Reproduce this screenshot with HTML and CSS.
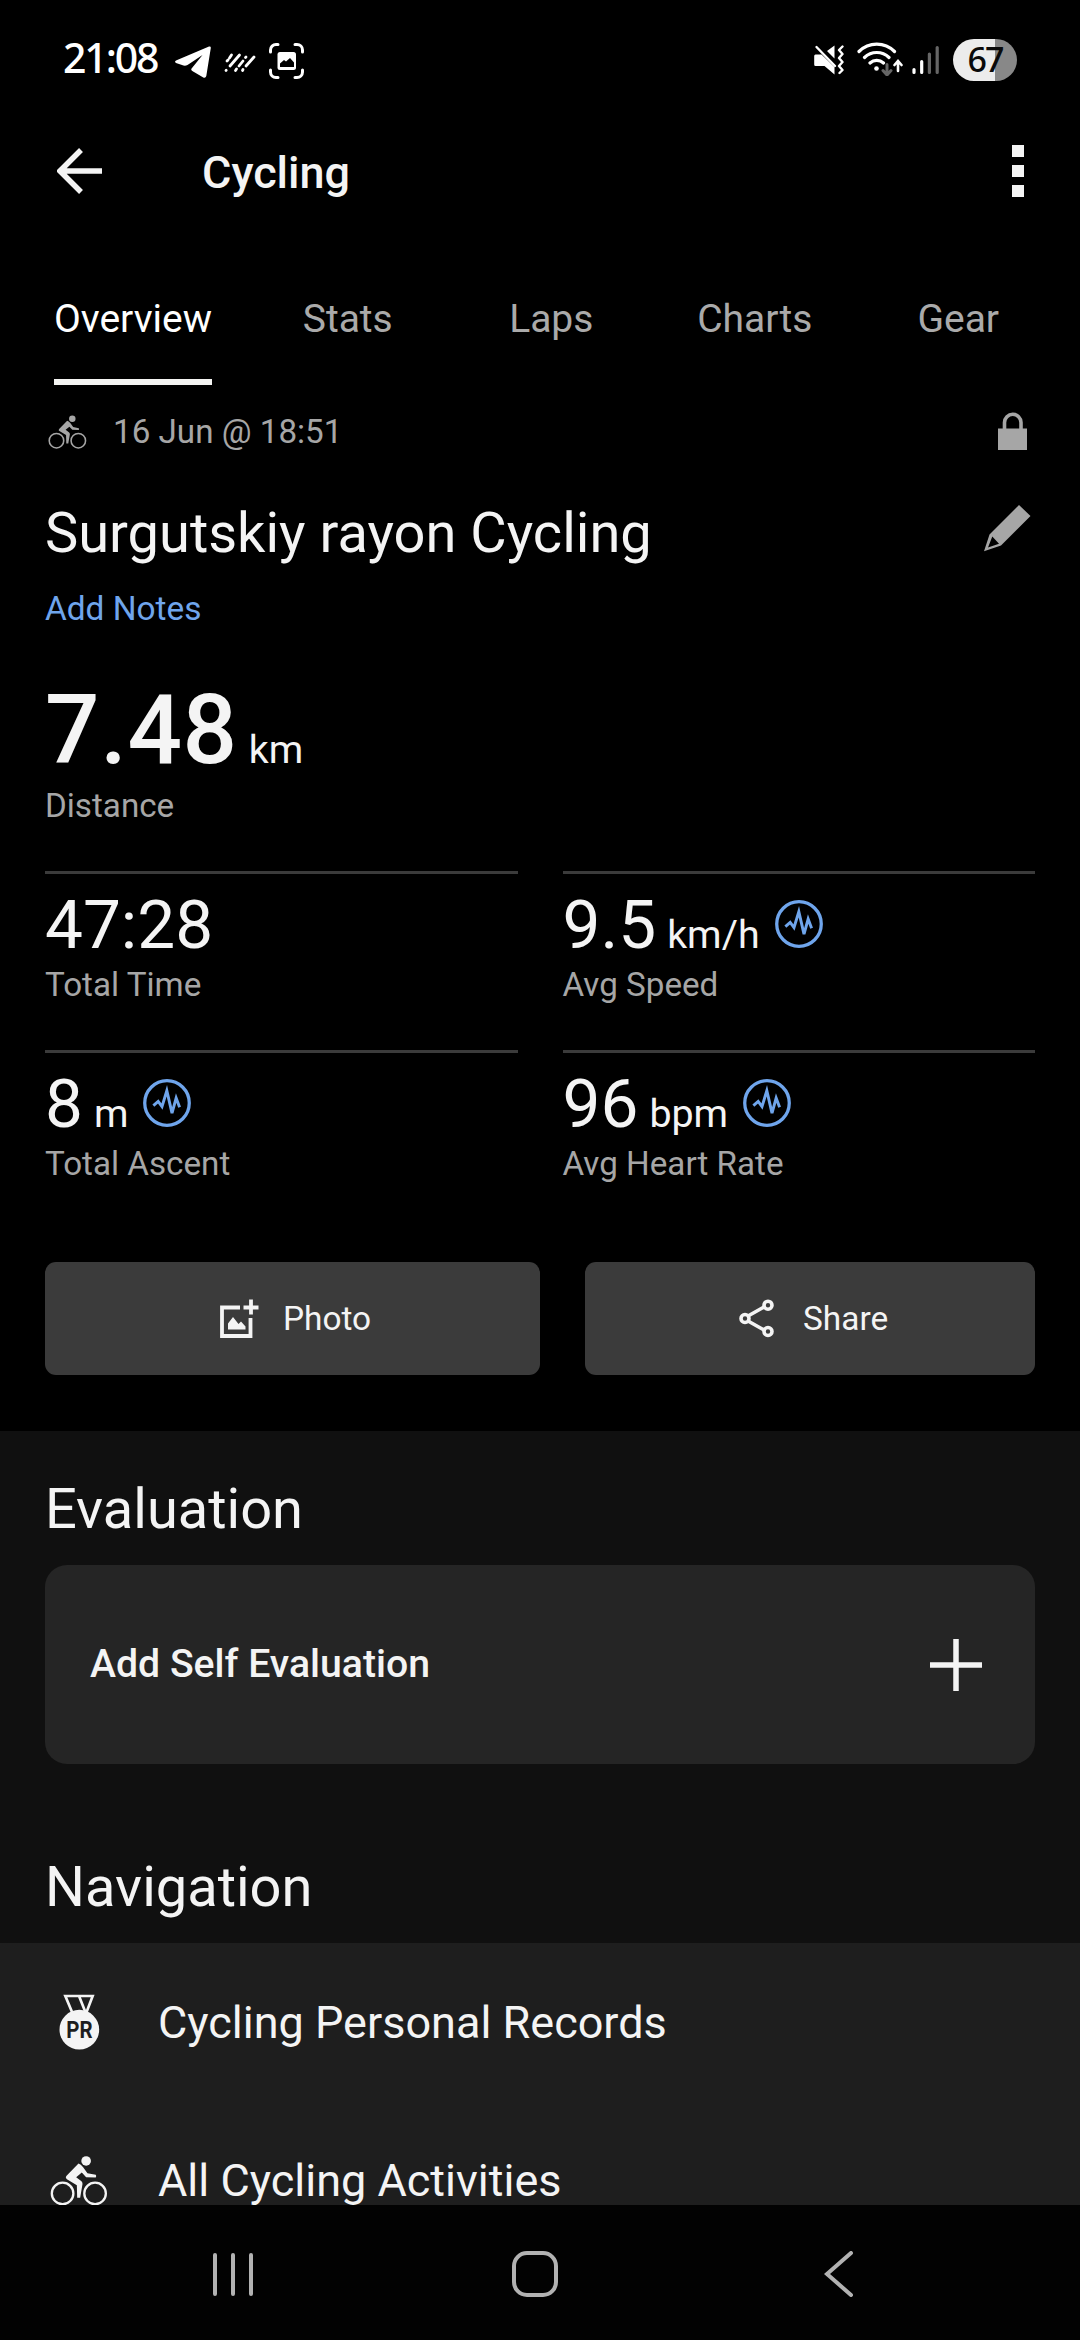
FILE: index.html
```html
<!DOCTYPE html>
<html lang="en">
<head>
<meta charset="utf-8">
<title>Cycling</title>
<link rel="stylesheet" href="styles.css">
</head>
<body>
<svg class="defs" aria-hidden="true">
  <symbol id="cyclist" viewBox="60 520 175 152">
    <circle cx="98" cy="635" r="32.500" fill="none" stroke="currentColor" stroke-width="7"/>
    <circle cx="196" cy="635" r="32.500" fill="none" stroke="currentColor" stroke-width="7"/>
    <circle cx="169" cy="537" r="14.500" fill="currentColor"/>
    <path fill="currentColor" d="M146 545q7 2 14 11l13 18 25 5q3 3 0 8l-29-1-13-14-17 14 16 12q4 4 3 9l-7 41h-9l-1-38-30-18q-6-4-1-10z"/>
  </symbol>
  <symbol id="wave" viewBox="0 0 139 139">
    <circle cx="69.500" cy="69.500" r="64.500" fill="none" stroke="currentColor" stroke-width="9.500"/>
    <path d="M30 77l14-12 11 15 14-46 15 65 12-44 10 27" fill="none" stroke="currentColor" stroke-width="8.500"/>
  </symbol>
</svg>
<div class="screen">
  <div class="status">
    <span class="clock">21:08</span>
    <svg class="telegram" width="36" height="32" viewBox="0 0 36 32"><path fill="#fff" d="M1 14.500 34 .500q2-.500 1.800 1.500l-4.500 28q-.700 2.500-3 1.500l-11-6.500q-2-1.500-.300-3l10.500-13-15 10q-2 1-4 .500L1 17q-2-1.200 0-2.500z"/></svg>
    <svg class="dashes" width="32" height="20" viewBox="0 0 32 20"><path fill="none" stroke="#fff" stroke-width="2.800" stroke-linecap="round" d="M3 8l1-1M5.500 5l2-3M2 17.500l.200-.200M6 13l9.500-11M11.500 17.500l1-1.500M15 13l4-5M21.500 4.500l.500-.500M18.500 17.500l.500-1M22 13l8-9"/></svg>
    <svg class="capture" width="36" height="36" viewBox="0 0 36 36"><path fill="none" stroke="#fff" stroke-width="3" stroke-linecap="round" d="M1.500 9V7a5.500 5.500 0 0 1 5.500-5.500h2M26 1.500h2A5.500 5.500 0 0 1 33.500 7v2M33.500 27v2a5.500 5.500 0 0 1-5.500 5.500h-2M9 34.500H7A5.500 5.500 0 0 1 1.500 29v-2"/><rect x="8.500" y="9" width="18.500" height="18" rx="2.500" fill="#fff"/><path d="M11 24v-3.500l4-3.500 2 1.500 4-3.500 4 4.500V24z" fill="#000"/></svg>
    <span class="grow"></span>
    <svg class="mute" width="30" height="30" viewBox="0 0 30 30"><path fill="#fff" d="M1.500 9.500h6L20.500 22v7.500l-10-8.500h-9Q.200 21 .200 19.500V11q0-1.500 1.300-1.500zM13 6l7.500-5.500v13z"/><path d="M2.500 2l18.500 19" fill="none" stroke="#fff" stroke-width="2.400" stroke-linecap="round"/><path d="M28.500 1.500l-3.500 3.500 3.500 4-3.500 4 3.500 4-3.500 4 3.500 4-3 3" fill="none" stroke="#fff" stroke-width="2.400" stroke-linecap="round" stroke-linejoin="round"/></svg>
    <svg class="wifi" width="46" height="34" viewBox="0 0 46 34"><g fill="none" stroke="#fff" stroke-width="3.200" stroke-linecap="round"><path d="M2 9.500a25 25 0 0 1 35.500 0M7.500 15.500a17.500 17.500 0 0 1 24.500 0M13 21a10 10 0 0 1 13.500 0"/><path d="M41 29V20M37.500 23l3.500-4 3.500 4" stroke-width="2.600"/></g><circle cx="19.500" cy="26.500" r="2.300" fill="#fff"/><path d="M30 22.500v10M26 28.500l4 4.500 4-4.500" fill="none" stroke="#666" stroke-width="3" stroke-linecap="round"/></svg>
    <svg class="signal" width="28" height="30" viewBox="0 0 28 30"><g stroke-width="3.200" stroke-linecap="round"><path d="M2 24.500v3M9.700 16.500v11" stroke="#fff"/><path d="M17.400 9v18.500M25.200 2.500v25" stroke="#666"/></g></svg>
    <span class="battery">67</span>
  </div>

  <header class="bar">
    <svg class="back" width="46" height="46" viewBox="0 0 46 46"><path d="M24 2 3 23l21 21M3 23h42" fill="none" stroke="#f4f4f4" stroke-width="5.500"/></svg>
    <h1 class="bar-title">Cycling</h1>
    <div class="more"><i></i><i></i><i></i></div>
  </header>

  <nav class="tabs">
    <a class="tab tab-first"><span class="tab-label active">Overview</span></a>
    <a class="tab"><span class="tab-label">Stats</span></a>
    <a class="tab"><span class="tab-label">Laps</span></a>
    <a class="tab"><span class="tab-label">Charts</span></a>
    <a class="tab"><span class="tab-label">Gear</span></a>
  </nav>

  <main class="content">
    <section class="summary">
      <div class="date-row">
        <svg class="sport" width="39" height="34"><use href="#cyclist"/></svg>
        <span class="date">16 Jun @ 18:51</span>
        <svg class="lock" width="30" height="39" viewBox="0 0 30 39"><path d="M6.500 18V10.500a8 8 0 0 1 16.500 0V18" fill="none" stroke="#a6a6a6" stroke-width="3.600"/><path d="M0 16.500h29V38H0z" fill="#a6a6a6"/></svg>
      </div>
      <div class="name-row">
        <h2 class="name">Surgutskiy rayon Cycling</h2>
        <svg class="pencil" width="47" height="47" viewBox="0 0 47 47"><path fill="#a6a6a6" fill-rule="evenodd" d="M35 0 46.500 11 17 40.500 0 46.200 5.500 29.500zM8.300 31.500 4 42.500l11-3.700z"/></svg>
      </div>
      <a class="notes">Add Notes</a>

      <div class="distance"><span class="big">7.48</span><span class="unit">km</span></div>
      <div class="label distance-label">Distance</div>

      <div class="grid">
        <div class="cell"><div class="value"><span>47:28</span></div><div class="label">Total Time</div></div>
        <div class="cell"><div class="value"><span>9.5<span class="unit">km/h</span></span><svg class="wave" width="48" height="48"><use href="#wave"/></svg></div><div class="label">Avg Speed</div></div>
        <div class="cell"><div class="value"><span>8<span class="unit">m</span></span><svg class="wave" width="48" height="48"><use href="#wave"/></svg></div><div class="label">Total Ascent</div></div>
        <div class="cell"><div class="value"><span>96<span class="unit">bpm</span></span><svg class="wave" width="48" height="48"><use href="#wave"/></svg></div><div class="label">Avg Heart Rate</div></div>
      </div>

      <div class="buttons">
        <button class="button photo"><svg width="39" height="40" viewBox="0 0 39 40"><path d="M20 8.500H2V37h28.500V19" fill="none" stroke="#f4f4f4" stroke-width="3.800"/><path d="M23.500 8.500H38.500M31 .500V15.500" stroke="#f4f4f4" stroke-width="3.800"/><path d="M8 30.500v-6l5-6.500 5.500 7 2.500-2.500 4.500 5v3z" fill="#f4f4f4"/></svg>Photo</button>
        <button class="button share"><svg width="36" height="39" viewBox="0 0 36 39"><g fill="none" stroke="#f4f4f4" stroke-width="3.600"><path d="M9 17 26 7.500M9 22l17 9.500"/><circle cx="6" cy="19.500" r="4"/><circle cx="29" cy="6.200" r="4"/><circle cx="29" cy="32.500" r="4"/></g></svg>Share</button>
      </div>
    </section>

    <section class="more-info">
      <h2 class="heading">Evaluation</h2>
      <div class="card"><span>Add Self Evaluation</span><svg width="52" height="52" viewBox="0 0 52 52"><path d="M26 0v52M0 26h52" stroke="#f4f4f4" stroke-width="5.500"/></svg></div>
      <h2 class="heading nav-heading">Navigation</h2>
      <div class="list">
        <div class="row"><span class="row-icon"><svg width="41" height="56" viewBox="88 40 123 168"><path fill="none" stroke="#f4f4f4" stroke-width="8" d="M107 46h82l-19 50h-42zM148 46l20 50"/><circle cx="149" cy="147" r="59.500" fill="#f4f4f4"/><text class="pr" x="110" y="172" textLength="79" lengthAdjust="spacingAndGlyphs">PR</text></svg></span><span class="row-text">Cycling Personal Records</span></div>
        <div class="row"><span class="row-icon"><svg width="58" height="51"><use href="#cyclist"/></svg></span><span class="row-text">All Cycling Activities</span></div>
      </div>
    </section>
  </main>

  <footer class="navbar">
    <svg width="42" height="46" viewBox="0 0 42 46"><path d="M3 4v39M21 4v39M39 4v39" stroke="#b2b2b2" stroke-width="4" stroke-linecap="round"/></svg>
    <svg class="home" width="46" height="46" viewBox="0 0 46 46"><rect x="2" y="2" width="42" height="42" rx="13" fill="none" stroke="#b2b2b2" stroke-width="4"/></svg>
    <svg width="30" height="46" viewBox="0 0 30 46"><path d="M27 2 3 23l24 21" fill="none" stroke="#b2b2b2" stroke-width="4" stroke-linecap="round"/></svg>
  </footer>
</div>
</body>
</html>
```
FILE: styles.css
```css
* { box-sizing: border-box; }
body { margin: 0; background: #000; font-family: Roboto, sans-serif; color: #f4f4f4; }
h1, h2 { margin: 0; font-weight: 400; }
svg { display: block; flex: none; }
.defs { display: none; }

.screen { display: flex; flex-direction: column; width: 1080px; height: 2340px; overflow: hidden; }

/* Status bar */
.status { flex: none; display: flex; align-items: flex-start; height: 96px; padding: 0 63px 0 63px; }
.clock { width: 112px; padding-top: 32px; font: 500 41px/50px "Noto Sans", sans-serif; letter-spacing: -2.1px; white-space: nowrap; color: #fff; }
.telegram { margin-top: 46px; }
.dashes { margin: 53px 0 0 13px; }
.capture { margin: 43px 0 0 13px; }
.grow { flex: 1; }
.mute { margin-top: 45px; }
.wifi { margin: 42px 0 0 13px; }
.signal { margin: 45px 0 0 9px; }
.battery { width: 64px; height: 42px; margin: 39px 0 0 13px; border-radius: 21px; background: linear-gradient(90deg, #ececec 66%, #888 66%); color: #0a0a0a; font: 500 34px/41px "Noto Sans", sans-serif; letter-spacing: -2px; text-align: center; }

/* App bar */
.bar { flex: none; display: flex; align-items: center; height: 150px; padding: 0 56px 0 57px; }
.bar-title { flex: 1; margin-left: 99px; padding-top: 3px; font-size: 45px; font-weight: 500; line-height: 54px; }
.more { display: flex; flex-direction: column; gap: 8px; }
.more i { width: 12px; height: 12px; background: #f4f4f4; }

/* Tabs */
.tabs { flex: none; display: flex; height: 139px; padding-left: 20px; }
.tab { display: flex; justify-content: center; width: 203.500px; color: #aaa; font-size: 39px; line-height: 47px; }
.tab-first { width: 226px; }
.tab-label { padding-top: 50px; }
.active { color: #fff; border-bottom: 6px solid #f4f4f2; }

.content { flex: 1; min-height: 0; overflow: hidden; }

/* Activity summary */
.summary { padding: 0 45px 56px; }
.date-row { display: flex; align-items: center; height: 93px; padding: 0 7px 0 3px; color: #a6a6a6; }
.date { flex: 1; margin-left: 26px; font-size: 33.200px; line-height: 40px; }
.name-row { display: flex; align-items: center; justify-content: space-between; height: 110px; padding-right: 4px; }
.name { font-size: 56px; line-height: 66px; }
.pencil { margin-bottom: 10px; }
.notes { display: block; font-size: 33.400px; line-height: 41px; color: #6fa5ec; }
.distance { display: flex; align-items: baseline; height: 96px; margin-top: 53px; }
.big { font-size: 96px; font-weight: 500; line-height: 96px; letter-spacing: .6px; }
.unit { margin-left: 11px; font-size: 39.375px; line-height: 47px; }
.label { font-size: 33.200px; line-height: 40px; color: #a6a6a6; }
.distance-label { margin: 8px 0 45px; }
.grid { display: grid; grid-template-columns: 1fr 1fr; column-gap: 45px; }
.cell { height: 179px; padding-top: 16px; border-top: 3px solid #3b3b3b; }
.value { display: flex; align-items: center; height: 70px; font-size: 67.500px; line-height: 70px; }
.value + .label { margin-top: 5px; }
.wave { margin: 0 0 2px 15px; color: #6fa5ec; }
.buttons { display: grid; grid-template-columns: 495px 450px; column-gap: 45px; margin-top: 33px; }
.button { display: flex; align-items: center; height: 113px; padding: 0; border: 0; border-radius: 11px; background: #3b3b3b; color: #f4f4f4; font: 33.400px/40px Roboto, sans-serif; gap: 24px; }
.photo { padding-left: 175px; }
.share { padding-left: 154px; gap: 28px; }

/* Evaluation and navigation */
.more-info { background: #101010; padding-top: 48px; }
.heading { padding: 0 45px; font-size: 56px; line-height: 60px; }
.card { display: flex; align-items: center; justify-content: space-between; height: 199px; margin: 26px 45px 93px; padding: 0 53px 0 45px; border-radius: 22px; background: #252525; font-size: 39.200px; font-weight: 500; line-height: 47px; }
.list { margin-top: 26px; background: #1e1e1e; }
.row { display: flex; align-items: center; height: 158px; padding-left: 45px; font-size: 45px; line-height: 54px; }
.row-icon { display: flex; justify-content: center; width: 68px; margin-right: 45px; }
.row-text { padding-top: 2px; }
.pr { font: 700 70px Roboto, sans-serif; fill: #1e1e1e; }

/* System navigation */
.navbar { flex: none; display: flex; align-items: center; justify-content: space-between; height: 135px; padding: 2px 226px 0 212px; background: #020202; }
.home { margin-left: -8px; }
```
